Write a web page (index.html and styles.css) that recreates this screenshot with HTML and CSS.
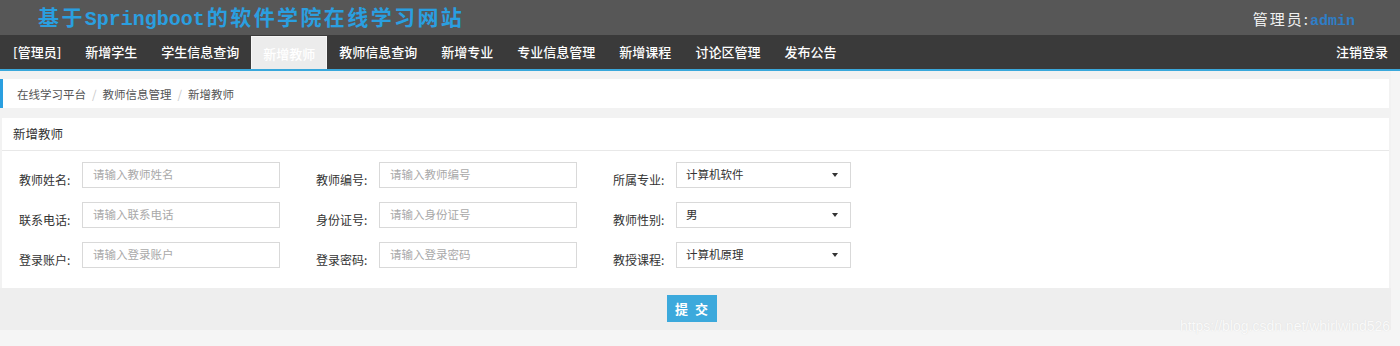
FILE: index.html
```html
<!DOCTYPE html>
<html lang="zh-CN">
<head>
<meta charset="utf-8">
<title>新增教师</title>
<link rel="stylesheet" href="styles.css">
</head>
<body>
<header class="top">
  <h1 class="site-title">基于<span class="latin">Springboot</span>的软件学院在线学习网站</h1>
  <div class="user">管理员:<span class="admin">admin</span></div>
</header>
<nav class="nav">
  <ul class="nav-list">
    <li class="nav-item">[管理员]</li>
    <li class="nav-item">新增学生</li>
    <li class="nav-item">学生信息查询</li>
    <li class="nav-item active">新增教师</li>
    <li class="nav-item">教师信息查询</li>
    <li class="nav-item">新增专业</li>
    <li class="nav-item">专业信息管理</li>
    <li class="nav-item">新增课程</li>
    <li class="nav-item">讨论区管理</li>
    <li class="nav-item">发布公告</li>
  </ul>
  <div class="nav-item logout">注销登录</div>
</nav>
<main class="wrap">
  <div class="crumb">
    <span>在线学习平台</span><span class="sep">/</span><span>教师信息管理</span><span class="sep">/</span><span>新增教师</span>
  </div>
  <section class="panel">
    <div class="panel-head">新增教师</div>
    <div class="panel-body">
      <div class="row">
        <div class="field"><label class="lbl">教师姓名:</label><div class="inp">请输入教师姓名</div></div>
        <div class="field"><label class="lbl">教师编号:</label><div class="inp">请输入教师编号</div></div>
        <div class="field"><label class="lbl">所属专业:</label><div class="sel"><span>计算机软件</span><i class="caret"></i></div></div>
      </div>
      <div class="row">
        <div class="field"><label class="lbl">联系电话:</label><div class="inp">请输入联系电话</div></div>
        <div class="field"><label class="lbl">身份证号:</label><div class="inp">请输入身份证号</div></div>
        <div class="field"><label class="lbl">教师性别:</label><div class="sel"><span>男</span><i class="caret"></i></div></div>
      </div>
      <div class="row">
        <div class="field"><label class="lbl">登录账户:</label><div class="inp">请输入登录账户</div></div>
        <div class="field"><label class="lbl">登录密码:</label><div class="inp">请输入登录密码</div></div>
        <div class="field"><label class="lbl">教授课程:</label><div class="sel"><span>计算机原理</span><i class="caret"></i></div></div>
      </div>
    </div>
  </section>
  <div class="actions"><button class="btn">提 交</button></div>
</main>
<div class="watermark">https://blog.csdn.net/whirlwind526</div>
</body>
</html>
```
FILE: styles.css
```css
* { box-sizing: border-box; }
html, body { margin: 0; padding: 0; }
body {
  background: #f5f5f5;
  font-family: "Noto Sans CJK SC", "Liberation Sans", sans-serif;
  font-size: 13px;
  color: #333;
  height: 346px;
  overflow: hidden;
  position: relative;
}
.top {
  height: 35px;
  background: #575757;
  display: flex;
  align-items: flex-start;
  justify-content: space-between;
}
.site-title {
  margin: 0;
  padding: 2px 0 0 38px;
  font-family: "Noto Sans CJK SC", sans-serif;
  font-size: 21px;
  font-weight: 700;
  line-height: 28px;
  letter-spacing: 2.4px;
  color: #2a9fe0;
}
.site-title .latin {
  font-family: "Liberation Mono", monospace;
  font-size: 20px;
  letter-spacing: 0;
  margin: 0 2px 0 0;
}
.user {
  padding: 8px 45px 0 0;
  font-size: 15px;
  line-height: 22px;
  color: #f0f0f0;
  letter-spacing: 2px;
}
.user .admin {
  font-family: "Liberation Mono", monospace;
  font-weight: 700;
  color: #2f7ec6;
  letter-spacing: 0;
}
.nav {
  height: 36px;
  background: #3a3a3a;
  border-bottom: 2px solid #3aa8db;
  display: flex;
  justify-content: space-between;
}
.nav-list {
  list-style: none;
  margin: 0;
  padding: 0 0 0 1px;
  display: flex;
}
.nav-item {
  padding: 0 12px;
  line-height: 34px;
  color: #fff;
  font-size: 13px;
  font-weight: 500;
  white-space: nowrap;
}
.nav-item.active {
  background: #ececec;
  color: #fff;
  border: 1px solid #f6f6f6;
  border-bottom: 0;
  line-height: 33px;
  padding: 0 11px;
  margin-top: 1px;
}
.logout { padding-right: 12px; }
.wrap {
  width: 1391px;
  background: #f2f2f2;
  padding-top: 8px;
}
.crumb {
  margin-right: 2px;
  height: 29px;
  background: #fff;
  border-left: 3px solid #2a9fe0;
  padding-left: 14px;
  display: flex;
  align-items: center;
  color: #555;
  font-size: 11.5px;
}
.crumb .sep {
  color: #c8c8c8;
  margin: 0 6px;
}
.panel {
  margin: 10px 2px 0 2px;
  background: #fff;
}
.panel-head {
  height: 33px;
  line-height: 32px;
  padding-left: 11px;
  border-bottom: 1px solid #e8e8e8;
  color: #333;
  font-size: 12.5px;
}
.panel-body {
  padding: 11px 0 20px 17px;
  display: flex;
  flex-direction: column;
  gap: 14px;
}
.row {
  display: flex;
  gap: 36px;
}
.field {
  display: flex;
  align-items: flex-start;
  height: 26px;
}
.lbl {
  width: 63px;
  margin-top: 10px;
  line-height: 16px;
  font-size: 12px;
  color: #333;
}
.inp {
  width: 198px;
  height: 26px;
  border: 1px solid #d9d9d9;
  padding-left: 10px;
  line-height: 23px;
  color: #a9a9a9;
  font-size: 11.5px;
}
.sel {
  width: 175px;
  height: 26px;
  border: 1px solid #d9d9d9;
  padding: 0 12px 0 9px;
  display: flex;
  align-items: center;
  justify-content: space-between;
  color: #333;
  font-size: 11.5px;
}
.sel span { margin-top: -3px; }
.caret {
  width: 0;
  height: 0;
  border-left: 3.5px solid transparent;
  border-right: 3.5px solid transparent;
  border-top: 4px solid #333;
}
.actions {
  background: #eee;
  height: 42px;
  display: flex;
  justify-content: center;
  align-items: flex-start;
  padding-top: 7px;
  padding-right: 8px;
}
.btn {
  width: 50px;
  height: 27px;
  border: 0;
  background: #3ca9dc;
  color: #fff;
  font-family: "Noto Sans CJK SC", sans-serif;
  font-size: 13px;
  font-weight: 700;
  letter-spacing: 2px;
  padding: 0 0 0 2px;
}
.watermark {
  position: absolute;
  left: 1180px;
  top: 318px;
  font-family: "Liberation Sans", sans-serif;
  font-size: 14px;
  color: #fafafa;
  text-shadow: 0 0 1px #d8d8d8;
}
```
